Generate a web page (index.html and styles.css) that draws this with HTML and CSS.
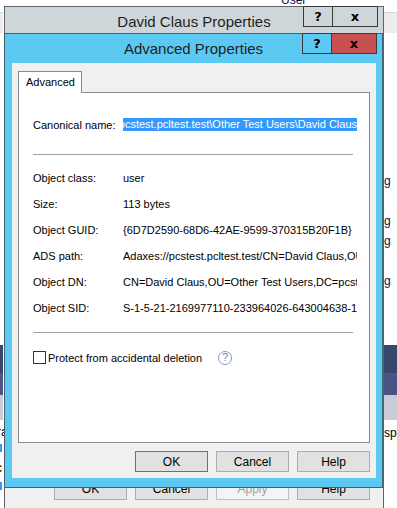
FILE: index.html
```html
<html>
  <head>
    <meta charset="utf-8">
    <link rel="stylesheet" href="styles.css">
  </head>
  <body>
    <div class="desk">
      <!-- bits of the desktop behind the two windows -->
      <span class="bg-text user">User</span>
      <div class="bg-strip strip-left"></div>
      <div class="bg-strip strip-right"></div>
      <span class="bg-text g1">g</span>
      <span class="bg-text g2">g</span>
      <span class="bg-text g3">g</span>
      <span class="bg-text g4">g</span>
      <div class="bg-band band-left"></div>
      <div class="bg-band band-right"></div>
      <span class="bg-text spo">spo</span>
      <span class="bg-text ra">ra</span>
      <span class="bg-text cc">c</span>
      <div class="bg-mark m1"></div>
      <div class="bg-mark m2"></div>

      <!-- owner window -->
      <div class="win back">
        <div class="caption">
          <span></span>
          <span class="caption-title">David Claus Properties</span>
          <div class="caption-btns">
            <span class="cbtn help">?</span>
            <span class="cbtn close">x</span>
          </div>
        </div>
        <div class="back-body"></div>
        <div class="btn-row">
          <button class="btn">OK</button>
          <button class="btn">Cancel</button>
          <button class="btn disabled">Apply</button>
          <button class="btn">Help</button>
        </div>
      </div>

      <!-- active dialog -->
      <div class="win front">
        <div class="caption">
          <span></span>
          <span class="caption-title">Advanced Properties</span>
          <div class="caption-btns">
            <span class="cbtn help">?</span>
            <span class="cbtn close">x</span>
          </div>
        </div>
        <div class="client">
          <div class="tabs">
            <span class="tab">Advanced</span>
          </div>
          <div class="panel">
            <div class="row canon">
              <span class="label">Canonical name:</span>
              <span class="value selected"><span>pcstest.pcltest.test\Other Test Users\David Claus</span></span>
            </div>
            <div class="sep first"></div>
            <div class="props">
              <div class="row"><span class="label">Object class:</span><span class="value">user</span></div>
              <div class="row"><span class="label">Size:</span><span class="value">113 bytes</span></div>
              <div class="row"><span class="label">Object GUID:</span><span class="value">{6D7D2590-68D6-42AE-9599-370315B20F1B}</span></div>
              <div class="row"><span class="label">ADS path:</span><span class="value">Adaxes://pcstest.pcltest.test/CN=David Claus,OU=Other Test Users,DC=pcstest,DC=pcltest,DC=test</span></div>
              <div class="row"><span class="label">Object DN:</span><span class="value">CN=David Claus,OU=Other Test Users,DC=pcstest,DC=pcltest,DC=test</span></div>
              <div class="row"><span class="label">Object SID:</span><span class="value">S-1-5-21-2169977110-233964026-643004638-1652</span></div>
            </div>
            <div class="sep"></div>
            <label class="check-row">
              <span class="checkbox"></span>
              <span>Protect from accidental deletion</span>
              <span class="qmark">?</span>
            </label>
          </div>
          <div class="btn-row">
            <button class="btn default">OK</button>
            <button class="btn">Cancel</button>
            <button class="btn">Help</button>
          </div>
        </div>
      </div>
    </div>
  </body>
</html>
```

FILE: styles.css
```css
body {
  margin: 0;
  background: #fff;
  font-family: "Liberation Sans", Arial, sans-serif;
  font-size: 11px;
  color: #000;
}
.desk {
  position: relative;
  width: 397px;
  height: 508px;
  overflow: hidden;
  background: #fff;
}

/* desktop leftovers */
.bg-text {
  position: absolute;
  font-size: 12px;
  line-height: 14px;
  color: #10104a;
}
.user { left: 281px; top: -7px; }
.g1 { left: 384px; top: 174px; }
.g2 { left: 384px; top: 214px; }
.g3 { left: 384px; top: 234px; }
.g4 { left: 384px; top: 274px; }
.spo { left: 384px; top: 426px; color: #000; }
.ra { left: -3px; top: 425px; color: #000; }
.cc { left: -4px; top: 461px; color: #000; }
.bg-strip {
  position: absolute;
  top: 12px;
  height: 20px;
  background: #ececec;
  border-top: 1px solid #d4d4d4;
}
.strip-left { left: 0; width: 3px; }
.strip-right { left: 383px; width: 14px; }
.bg-band {
  position: absolute;
  top: 345px;
  height: 75px;
  background: linear-gradient(#37466c 0, #37466c 28px, #4b5384 28px, #4b5384 50px, #c9ccd8 50px);
}
.band-left { left: 0; width: 3px; }
.band-right { left: 383px; width: 14px; }
.bg-mark {
  position: absolute;
  left: 0;
  width: 2px;
  height: 8px;
  background: #3399ff;
}
.m1 { top: 444px; }
.m2 { top: 482px; }

/* windows */
.win {
  position: absolute;
  box-sizing: border-box;
  display: flex;
  flex-direction: column;
}
.caption {
  display: grid;
  grid-template-columns: 1fr auto 1fr;
  align-items: start;
  flex: none;
}
.caption-title {
  font-size: 15px;
  color: #1e1e1e;
  white-space: nowrap;
}
.caption-btns {
  justify-self: end;
  display: flex;
  margin-right: 5px;
}
.cbtn {
  box-sizing: border-box;
  height: 21px;
  display: flex;
  align-items: center;
  justify-content: center;
  font-family: "DejaVu Sans", sans-serif;
  font-weight: bold;
  font-size: 13px;
  color: #000;
  border: 1px solid #3a3a3a;
}
.cbtn.help { width: 30px; }
.cbtn.close { width: 45px; border-left: none; }

.back {
  left: 4px;
  top: 6px;
  width: 380px;
  height: 505px;
  background: #f0f0f0;
  border: 1px solid #5e6469;
}
.back .caption {
  height: 26px;
  background: #cfd6da;
}
.back .caption-btns { margin-top: -1px; margin-right: 5px; }
.back .caption-title { padding-top: 6px; }
.back-body { flex: 1; }
.back .btn-row { padding: 0 13px 10px 0; }

.front {
  left: 4px;
  top: 33px;
  width: 379px;
  height: 455px;
  background: #5cc9f2;
  border: 1px solid #45606e;
}
.front .caption { height: 29px; }
.front .caption-btns { margin-top: -1px; margin-right: 5px; }
.front .caption-title { padding-top: 6px; }
.front .cbtn.close { background: #c75050; border-color: #3a3a3a; }

.client {
  flex: 1;
  margin: 0 6px 9px 7px;
  padding: 8px 6px 6px 6px;
  background: #f0f0f0;
  display: flex;
  flex-direction: column;
}
.tabs {
  display: flex;
  position: relative;
  z-index: 1;
  margin-bottom: -1px;
}
.tab {
  box-sizing: border-box;
  width: 64px;
  height: 22px;
  padding: 4px 0 0 7px;
  background: #fff;
  border: 1px solid #898c95;
  border-bottom: none;
}
.panel {
  flex: 1;
  background: #fff;
  border: 1px solid #898c95;
  padding: 25px 0 0 14px;
}

.row {
  display: flex;
  align-items: center;
  height: 26px;
}
.row.canon { height: 13px; }
.label {
  width: 90px;
  flex: none;
  white-space: nowrap;
}
.value {
  width: 234px;
  overflow: hidden;
  white-space: nowrap;
}
.value.selected {
  display: flex;
  justify-content: flex-end;
  height: 13px;
  line-height: 13px;
  background: #3399ff;
  color: #fff;
}
.value.selected span { flex: none; }

.sep {
  height: 1px;
  margin: 11px 16px 0 0;
  background: #a0a0a0;
}
.sep.first { margin-top: 23px; }
.props { margin-top: 10px; }

.check-row {
  display: flex;
  align-items: center;
  height: 13px;
  margin-top: 18px;
}
.checkbox {
  box-sizing: border-box;
  width: 13px;
  height: 13px;
  margin-right: 2px;
  background: #fff;
  border: 1px solid #333;
}
.qmark {
  box-sizing: border-box;
  width: 14px;
  height: 14px;
  margin-left: 16px;
  border: 1px solid #7c9cc4;
  border-radius: 50%;
  display: flex;
  align-items: center;
  justify-content: center;
  font-size: 11px;
  line-height: 1;
  color: #6f8fb9;
}

.btn-row {
  display: flex;
  justify-content: flex-end;
  gap: 8px;
  margin-top: 8px;
}
.btn {
  box-sizing: border-box;
  width: 73px;
  height: 21px;
  padding: 0;
  font: inherit;
  font-size: 12px;
  color: #000;
  background: #e1e1e1;
  border: 1px solid #adadad;
}
.btn.default { border-color: #3c7fb1; }
.btn.disabled {
  color: #a0a0a0;
  background: #f4f4f4;
  border-color: #bfbfbf;
}
.back .btn-row .btn { height: 22px; }
```
